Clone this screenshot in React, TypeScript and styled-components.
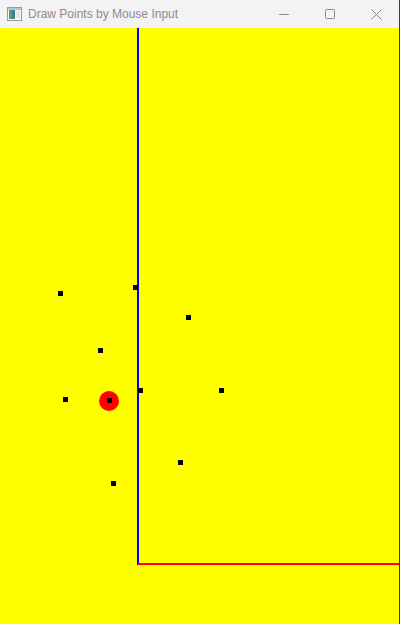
import React from 'react'
import styled, { createGlobalStyle } from 'styled-components'

const GlobalStyle = createGlobalStyle`
	html, body {
		margin: 0;
		padding: 0;
		background: #ffff00;
		overflow: hidden;
	}
`

const Window = styled.div`
	width: 400px;
	height: 624px;
	display: flex;
	flex-direction: column;
	box-sizing: border-box;
	border-right: 1px solid #3a3a3a;
	background: #ffff00;
`

const TitleBar = styled.div`
	height: 28px;
	flex: none;
	display: flex;
	align-items: center;
	background: #f3f3f3;
	font-family: 'Liberation Sans', 'Noto Sans', sans-serif;
	font-size: 12px;
	color: #8c8c8c;
`

const AppIcon = styled.svg`
	margin: 0 6px 0 7px;
	flex: none;
`

const Title = styled.div`
	flex: 1;
	white-space: nowrap;
	margin-top: -1px;
`

const Controls = styled.div`
	display: flex;
	height: 100%;
`

const ControlButton = styled.div`
	width: 46px;
	height: 100%;
	display: flex;
	align-items: center;
	justify-content: center;
`

const Canvas = styled.svg`
	flex: 1;
	display: block;
`

type Pt = { x: number; y: number }

// top-left corners of the 5x5 point markers, in page coordinates
const points: Pt[] = [
	{ x: 58, y: 291 },
	{ x: 133, y: 285 },
	{ x: 186, y: 315 },
	{ x: 98, y: 348 },
	{ x: 63, y: 397 },
	{ x: 107, y: 398 },
	{ x: 138, y: 388 },
	{ x: 219, y: 388 },
	{ x: 178, y: 460 },
	{ x: 111, y: 481 },
]

const TOP = 28

export default function App() {
	return (
		<Window>
			<GlobalStyle />
			<TitleBar>
				<AppIcon width="15" height="14" viewBox="0 0 15 14">
					<rect x="0.5" y="0.5" width="14" height="13" fill="#f7f7f7" stroke="#9a9a9a" />
					<rect x="1" y="1" width="13" height="2" fill="#b9c4cc" />
					<rect x="2" y="3" width="6" height="9" fill="#3d7f8f" />
					<rect x="2" y="3" width="3" height="9" fill="#5a9e6a" />
					<rect x="9" y="4" width="4" height="7" fill="#e4e4e4" />
				</AppIcon>
				<Title>Draw Points by Mouse Input</Title>
				<Controls>
					<ControlButton>
						<svg width="10" height="10" viewBox="0 0 10 10">
							<line x1="0" y1="5.5" x2="10" y2="5.5" stroke="#8a8a8a" strokeWidth="1" />
						</svg>
					</ControlButton>
					<ControlButton>
						<svg width="10" height="10" viewBox="0 0 10 10">
							<rect x="0.5" y="0.5" width="9" height="9" rx="1" fill="none" stroke="#8a8a8a" strokeWidth="1" />
						</svg>
					</ControlButton>
					<ControlButton>
						<svg width="11" height="11" viewBox="0 0 11 11">
							<path d="M0.5 0.5 L10.5 10.5 M10.5 0.5 L0.5 10.5" stroke="#8a8a8a" strokeWidth="1" />
						</svg>
					</ControlButton>
				</Controls>
			</TitleBar>
			<Canvas viewBox={`0 ${TOP} 399 596`} width="399" height="596">
				<rect x="137" y={TOP} width="2" height={565 - TOP} fill="#0000ff" />
				<rect x="138" y="563" width="261" height="2" fill="#ff0000" />
				<circle cx="109" cy="401" r="10" fill="#ff0000" />
				{points.map((p, i) => (
					<rect key={i} x={p.x} y={p.y} width="5" height="5" fill="#000" />
				))}
			</Canvas>
		</Window>
	)
}
